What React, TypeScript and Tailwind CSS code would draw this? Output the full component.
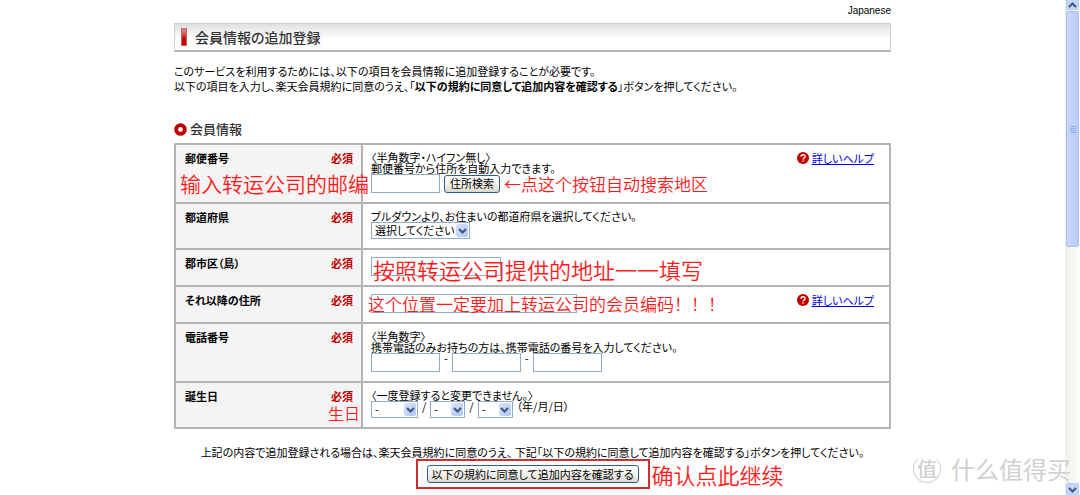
const note = "font-['Noto_Sans_CJK_SC',sans-serif] font-[350] text-[#ff1a1a] whitespace-nowrap leading-none"
const box = "h-[19px] rounded-none border border-[#8fadc9] bg-white px-1 text-[11px] outline-none"
const xpButton = "rounded-[3px] border border-[#2f5f8c] bg-linear-to-b from-white via-[#f3f2ec] to-[#dcd8cb] text-[11px] leading-none text-black whitespace-nowrap"

function Arrow({up}:{up?:boolean}){
    return(
        <svg viewBox="0 0 9 6" className="w-[9px] h-[6px]" fill="none" stroke="#44597f" strokeWidth="2.2">
            <path d={up ? "M1 5 L4.5 1.5 L8 5" : "M1 1 L4.5 4.5 L8 1"}/>
        </svg>
    )
}

function Pick({label,options,width}:{label:string,options:string[],width:string}){
    return(
        <span className={"relative inline-flex h-[17px] " + width}>
            <select aria-label={label} className="w-full h-full appearance-none rounded-none border border-[#8fadc9] bg-white pl-[3px] pr-3 text-[11px] leading-none outline-none">
                {options.map((item)=>(
                    <option key={item}>{item}</option>
                ))}
            </select>
            <span className="pointer-events-none absolute right-[2px] inset-y-[2px] flex w-[12px] items-center justify-center rounded-xs bg-linear-to-br from-[#d9e4fd] to-[#afc5f5]">
                <Arrow/>
            </span>
        </span>
    )
}

function Head({id,title,children}:{id?:string,title:string,children?:React.ReactNode}){
    return(
        <th scope="row" className="relative w-[187px] border-2 border-[#b3b3b3] bg-[#f4f4f4] pl-[9px] pr-2 pt-[7px] text-left align-top font-bold">
            <div className="flex justify-between leading-[13px]">
                <label htmlFor={id}>{title}</label>
                <span className="text-[#c00000]">必須</span>
            </div>
            {children}
        </th>
    )
}

function Help(){
    return(
        <div className="flex shrink-0 items-start gap-[3px] pr-[7px]">
            <svg viewBox="0 0 12 12" className="w-3 h-3">
                <circle cx="6" cy="6" r="6" fill="#bf0000"/>
                <path d="M4 4.7 C4 2.2 8.2 2.2 8.1 4.6 C8.1 6 6.1 6 6.1 7.5 M6.1 8.5 V9.8" fill="none" stroke="#fff" strokeWidth="1.4"/>
            </svg>
            <a href="#help" className="text-[#0000ee] underline leading-3">詳しいヘルプ</a>
        </div>
    )
}

const cell = "relative border-2 border-[#b3b3b3] px-2 pt-[7px] align-top leading-[11px]"

function App(){
    return(
        <div className="relative flex h-screen overflow-hidden bg-white font-['Noto_Sans_CJK_JP',sans-serif] text-[11px] text-black [font-feature-settings:'palt']">
            <main className="flex-1">
                <div className="mx-auto w-full max-w-[717px]">
                    <p className="h-[23px] pt-1 text-right font-['Liberation_Sans',sans-serif] text-[10px] leading-[14px]">Japanese</p>

                    {/* Page title */}
                    <div className="flex h-[29px] items-center gap-2 border border-b-2 border-[#cfcfcf] border-b-[#b5b5b5] bg-linear-to-b from-[#e0e0e0] to-white to-60% px-[6px]">
                        <span className="h-[18px] w-[6px] border border-[#c66] bg-linear-to-b from-[#e88] to-[#c00000] to-60%"></span>
                        <h1 className="text-[14px] font-medium leading-none text-[#333]">会員情報の追加登録</h1>
                    </div>

                    <p className="pt-3 leading-[15px]">
                        このサービスを利用するためには、以下の項目を会員情報に追加登録することが必要です。<br/>
                        以下の項目を入力し、楽天会員規約に同意のうえ、「<b>以下の規約に同意して追加内容を確認する</b>」ボタンを押してください。
                    </p>

                    {/* Member form */}
                    <div className="mt-[27px] mb-[6px] flex items-center gap-[3px]">
                        <svg viewBox="0 0 12 12" className="w-[13px] h-[13px]">
                            <circle cx="6" cy="6" r="4" fill="#fff" stroke="#bf0000" strokeWidth="3.6"/>
                        </svg>
                        <h2 className="text-[13px] font-medium leading-[16px] text-[#333]">会員情報</h2>
                    </div>

                    <table className="w-full border-collapse">
                        <tbody>
                            <tr className="h-[59px]">
                                <Head id="zip" title="郵便番号">
                                    <p className={note + " absolute left-1 top-7 z-10 text-[21px]"}>输入转运公司的邮编</p>
                                </Head>
                                <td className={cell}>
                                    <div className="flex justify-between">
                                        <div>
                                            <p>〈半角数字・ハイフン無し〉</p>
                                            <p>郵便番号から住所を自動入力できます。</p>
                                            <div className="flex items-center gap-1">
                                                <input id="zip" className={box + " w-[69px]"}/>
                                                <button type="button" className={xpButton + " h-[18px] w-[56px]"}>住所検索</button>
                                                <span className={note + " text-[17px]"}>←点这个按钮自动搜索地区</span>
                                            </div>
                                        </div>
                                        <Help/>
                                    </div>
                                </td>
                            </tr>
                            <tr className="h-[46px]">
                                <Head title="都道府県"/>
                                <td className={cell}>
                                    <p>プルダウンより、お住まいの都道府県を選択してください。</p>
                                    <Pick label="都道府県" options={["選択してください"]} width="w-[99px]"/>
                                </td>
                            </tr>
                            <tr className="h-[37px]">
                                <Head id="city" title="郡市区（島）"/>
                                <td className={cell}>
                                    <input id="city" className={box + " block w-[130px]"}/>
                                    <p className={note + " absolute left-[10px] top-2 text-[22px]"}>按照转运公司提供的地址一一填写</p>
                                </td>
                            </tr>
                            <tr className="h-[37px]">
                                <Head id="address" title="それ以降の住所"/>
                                <td className={cell}>
                                    <div className="flex justify-between">
                                        <input id="address" className={box + " w-[206px]"}/>
                                        <Help/>
                                    </div>
                                    <p className={note + " absolute left-[5px] top-2 text-[17px] [font-feature-settings:normal]"}>这个位置一定要加上转运公司的会员编码！！！</p>
                                </td>
                            </tr>
                            <tr className="h-[59px]">
                                <Head id="tel" title="電話番号"/>
                                <td className={cell}>
                                    <p>〈半角数字〉</p>
                                    <p>携帯電話のみお持ちの方は、携帯電話の番号を入力してください。</p>
                                    <div className="flex gap-1">
                                        <input id="tel" className={box + " w-[69px]"}/>-
                                        <input aria-label="電話番号 2" className={box + " w-[69px]"}/>-
                                        <input aria-label="電話番号 3" className={box + " w-[69px]"}/>
                                    </div>
                                </td>
                            </tr>
                            <tr className="h-[46px]">
                                <Head title="誕生日">
                                    <p className={note + " absolute right-[1px] top-[22px] text-[16px]"}>生日</p>
                                </Head>
                                <td className={cell}>
                                    <p>〈一度登録すると変更できません。〉</p>
                                    <div className="flex gap-1">
                                        <Pick label="年" options={["-"]} width="w-[47px]"/>/
                                        <Pick label="月" options={["-"]} width="w-[35px]"/>/
                                        <Pick label="日" options={["-"]} width="w-[35px]"/>（年/月/日）
                                    </div>
                                </td>
                            </tr>
                        </tbody>
                    </table>

                    {/* Confirm */}
                    <p className="pt-[17px] text-center leading-[13px]">上記の内容で追加登録される場合は、楽天会員規約に同意のうえ、 下記「以下の規約に同意して追加内容を確認する」ボタンを押してください。</p>
                    <div className="relative mx-auto flex h-[30px] w-[234px] items-center justify-center border-2 border-[#cf2f2f]">
                        <button type="submit" className={xpButton + " h-[18px] w-[212px]"}>以下の規約に同意して追加内容を確認する</button>
                        <span className={note + " absolute left-full ml-1 text-[22px]"}>确认点此继续</span>
                    </div>
                </div>
            </main>

            {/* Scroll bar */}
            <aside className="flex w-[15px] flex-col items-center bg-linear-to-r from-[#f0efe8] to-[#fefefb]">
                <button type="button" aria-label="up" className="flex h-[10px] w-[13px] items-center justify-center rounded-b-xs border border-t-0 border-[#b4c8f6] bg-[#c6d5fb]">
                    <Arrow up/>
                </button>
                <div className="mt-[1px] flex h-[236px] w-[13px] flex-col items-center justify-center gap-[1px] rounded-xs border border-[#a9bff0] bg-linear-to-r from-[#c9d7fc] to-[#b9cbf8]">
                    {[0,1,2,3].map((item)=>(
                        <span key={item} className="h-px w-[6px] bg-[#91acec]"></span>
                    ))}
                </div>
                <button type="button" aria-label="down" className="mt-auto flex h-[12px] w-[13px] items-center justify-center rounded-t-xs border border-b-0 border-[#b4c8f6] bg-[#c6d5fb]">
                    <Arrow/>
                </button>
            </aside>

            {/* Watermark */}
            <div className="pointer-events-none absolute right-[9px] bottom-3 flex items-center gap-[10px] font-['Noto_Sans_CJK_SC',sans-serif] leading-none text-[#d0d0d0]">
                <span className="flex h-7 w-7 items-center justify-center rounded-full border border-[#d0d0d0] border-t-transparent text-[20px] font-medium">值</span>
                <span className="text-[24px]">什么值得买</span>
            </div>
        </div>
    )
}
export default App
